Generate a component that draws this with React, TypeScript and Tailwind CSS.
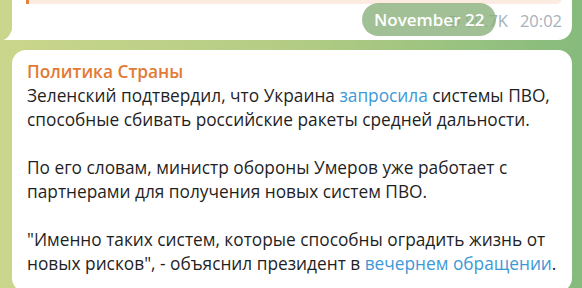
import { Eye } from 'lucide-react';

const App = () => {
  return (
    <div className="relative w-[582px] h-[288px] overflow-hidden bg-gradient-to-r from-[#cad68c] via-[#b3cc84] to-[#86bb7d] font-['Open_Sans',sans-serif] pl-[12px] pr-[10px]">
      {/* previous post, cut off at the top */}
      <div className="relative -mt-[20px] h-[60px] rounded-t-[14px] rounded-br-[14px] bg-white">
        <div className="ml-[14px] mr-[10px] h-[24px] rounded-r-[6px] border-l-[3px] border-[#e8823d] bg-[#fcebe0]" />
        <div className="flex items-center justify-end pr-[10px] pt-[5px] text-[16.5px] text-[#a6b2bc]">
          <Eye size={17} strokeWidth={2} />
          <span className="ml-[4px]">90.7K</span>
          <span className="ml-[12px]">20:02</span>
        </div>
        <svg className="absolute -left-[9px] bottom-0" width="10" height="14" viewBox="0 0 10 14">
          <path d="M10 0 V14 H0 C4 13 8 9 10 0 Z" fill="#ffffff" />
        </svg>
      </div>

      {/* floating date */}
      <div className="absolute left-[362px] top-[3px] flex h-[33px] items-center whitespace-nowrap rounded-full bg-[#8bb07a]/80 px-[12px] text-[17px] font-semibold text-white">
        November 22
      </div>

      {/* current post */}
      <div className="mt-[10px] rounded-[14px] bg-white px-[15px] pt-[10px] pb-[16px] text-[17.3px] leading-[24px] text-[#1f1f1f]">
        <div className="font-semibold text-[#e27a35]">Политика Страны</div>
        <p>
          Зеленский подтвердил, что Украина <span className="text-[#3d98d6]">запросила</span> системы ПВО,
          способные сбивать российские ракеты средней дальности.
        </p>
        <p className="mt-[24px]">
          По его словам, министр обороны Умеров уже работает с партнерами для получения новых систем ПВО.
        </p>
        <p className="mt-[24px]">
          "Именно таких систем, которые способны оградить жизнь от новых рисков", - объяснил президент в{' '}
          <span className="text-[#3d98d6]">вечернем обращении</span>.
        </p>
      </div>
    </div>
  );
};

export default App;
